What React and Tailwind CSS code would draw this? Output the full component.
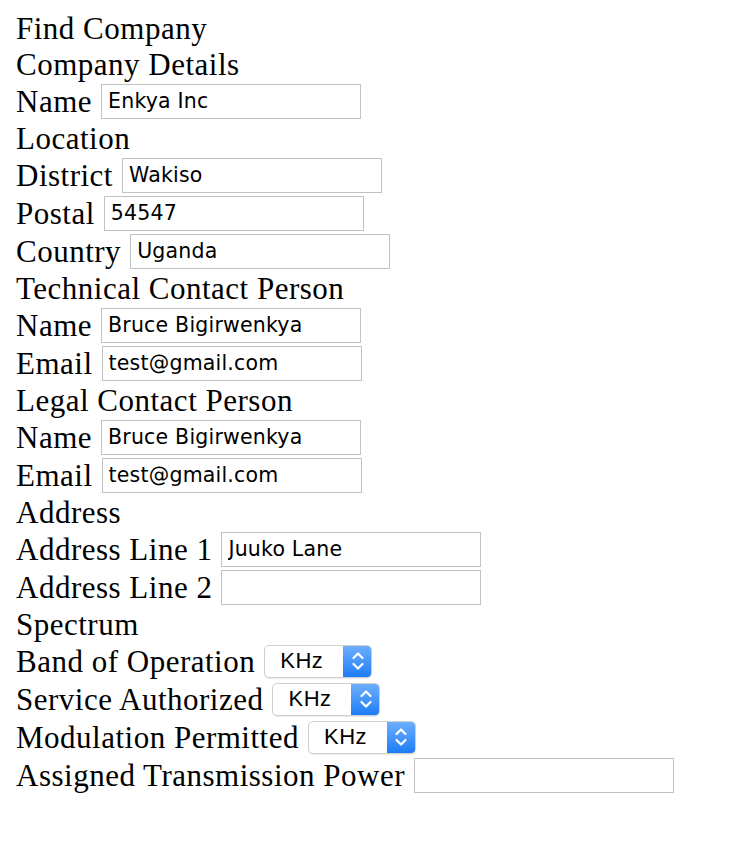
import React from "react";

const serif = { fontFamily: '"Liberation Serif", "Times New Roman", serif' };

function TextRow({ children }) {
  return (
    <div className="h-[36px] flex items-center whitespace-nowrap">{children}</div>
  );
}

function InputRow({ label, value = "" }) {
  return (
    <div className="h-[38px] flex items-center whitespace-nowrap">
      <span>{label}</span>
      <div
        className="ml-[9px] w-[260px] h-[35px] border border-[#c2c2c2] bg-white flex items-center pl-[6px] text-[20.5px] text-black"
        style={{ fontFamily: '"DejaVu Sans", Verdana, sans-serif', letterSpacing: "0.2px" }}
      >
        <input
          className="w-full bg-transparent outline-none border-0 p-0"
          defaultValue={value}
        />
      </div>
    </div>
  );
}

function SelectRow({ label }) {
  return (
    <div className="h-[38px] flex items-center whitespace-nowrap">
      <span>{label}</span>
      <div className="ml-[9px] w-[108px] h-[33px] rounded-[5px] border border-[#cfcfcf] bg-white flex items-stretch overflow-hidden shadow-[0_1px_1px_rgba(0,0,0,0.08)]">
        <span
          className="flex-1 flex items-center pl-[15px] text-[22px] text-black"
          style={{ fontFamily: '"Liberation Sans", Arial, sans-serif' }}
        >
          KHz
        </span>
        <span className="w-[29px] -my-px -mr-px bg-gradient-to-b from-[#6db0fd] to-[#167af6] flex items-center justify-center">
          <svg width="14" height="24" viewBox="0 0 14 24" fill="none" stroke="white" strokeWidth="2.2" strokeLinecap="round" strokeLinejoin="round">
            <path d="M2.5 9 L7 4.5 L11.5 9" />
            <path d="M2.5 15 L7 19.5 L11.5 15" />
          </svg>
        </span>
      </div>
    </div>
  );
}

export default function App() {
  return (
    <div
      className="bg-white text-black text-[31px] leading-none tracking-[0.5px] pt-[10px] pl-[16px] w-[752px] h-[856px]"
      style={serif}
    >
      <TextRow>Find Company</TextRow>
      <TextRow>Company Details</TextRow>
      <InputRow label="Name" value="Enkya Inc" />
      <TextRow>Location</TextRow>
      <InputRow label="District" value="Wakiso" />
      <InputRow label="Postal" value="54547" />
      <InputRow label="Country" value="Uganda" />
      <TextRow>Technical Contact Person</TextRow>
      <InputRow label="Name" value="Bruce Bigirwenkya" />
      <InputRow label="Email" value="test@gmail.com" />
      <TextRow>Legal Contact Person</TextRow>
      <InputRow label="Name" value="Bruce Bigirwenkya" />
      <InputRow label="Email" value="test@gmail.com" />
      <TextRow>Address</TextRow>
      <InputRow label="Address Line 1" value="Juuko Lane" />
      <InputRow label="Address Line 2" value="" />
      <TextRow>Spectrum</TextRow>
      <SelectRow label="Band of Operation" />
      <SelectRow label="Service Authorized" />
      <SelectRow label="Modulation Permitted" />
      <InputRow label="Assigned Transmission Power" value="" />
    </div>
  );
}
